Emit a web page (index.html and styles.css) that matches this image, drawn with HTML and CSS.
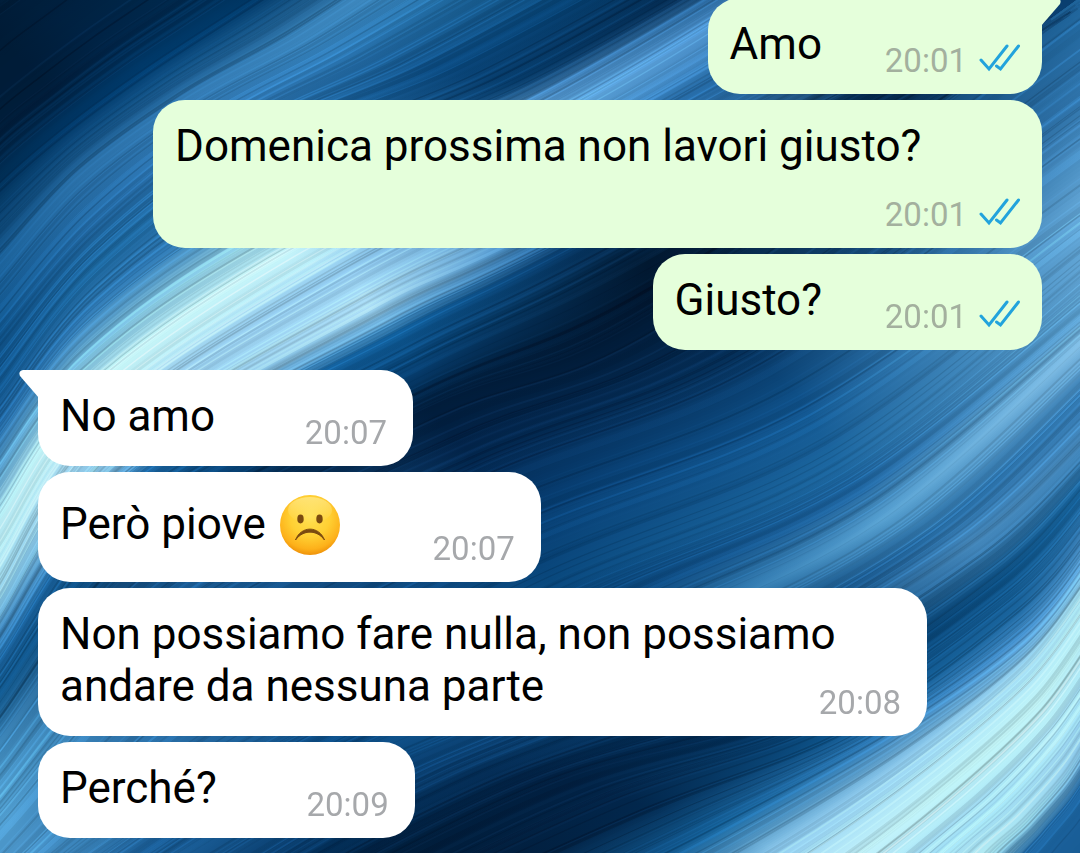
FILE: index.html
```html
<!DOCTYPE html>
<html lang="it">

<head>
    <meta charset="utf-8">
    <meta name="viewport" content="width=device-width, initial-scale=1">
    <title>Chat</title>
    <link rel="stylesheet" href="styles.css">
</head>

<body>
    <svg class="sprite" aria-hidden="true">
        <symbol id="ticks" viewBox="0 0 42 36">
            <path d="M2 17l8 9L28 3" />
            <path d="M17.500 23l4 3L39.500 3" />
        </symbol>
        <symbol id="tail" viewBox="0 0 20 28">
            <path d="M20 0H4Q-1 1 1 6L20 28z" />
        </symbol>
    </svg>

    <canvas id="wallpaper" width="1080" height="853"></canvas>

    <main class="chat">
        <div class="message out first">
            <svg class="tail"><use href="#tail" /></svg>
            <p>Amo<span class="spacer"></span></p>
            <div class="meta"><time>20:01</time><svg class="ticks"><use href="#ticks" /></svg></div>
        </div>
        <div class="message out">
            <p>Domenica prossima non lavori giusto?<span class="spacer"></span></p>
            <div class="meta"><time>20:01</time><svg class="ticks"><use href="#ticks" /></svg></div>
        </div>
        <div class="message out">
            <p>Giusto?<span class="spacer"></span></p>
            <div class="meta"><time>20:01</time><svg class="ticks"><use href="#ticks" /></svg></div>
        </div>

        <div class="message in first">
            <svg class="tail"><use href="#tail" /></svg>
            <p>No amo<span class="spacer"></span></p>
            <div class="meta"><time>20:07</time></div>
        </div>
        <div class="message in">
            <p>Però piove <svg class="emoji" viewBox="0 0 64 66" role="img" aria-label="faccina triste">
                    <defs>
                        <radialGradient id="face" cx="50%" cy="36%" r="66%">
                            <stop offset="0" stop-color="#ffe052" />
                            <stop offset="0.5" stop-color="#ffd033" />
                            <stop offset="0.82" stop-color="#fdb11a" />
                            <stop offset="1" stop-color="#ec8c06" />
                        </radialGradient>
                        <linearGradient id="shine" x1="0" y1="0" x2="0" y2="1">
                            <stop offset="0" stop-color="#fff0a0" stop-opacity="0.6" />
                            <stop offset="1" stop-color="#fff0a0" stop-opacity="0" />
                        </linearGradient>
                    </defs>
                    <circle cx="32" cy="33" r="30" fill="url(#face)" />
                    <ellipse cx="32" cy="18" rx="22" ry="13" fill="url(#shine)" />
                    <ellipse cx="22.500" cy="27" rx="3.2" ry="4.4" fill="#7a4a10" />
                    <ellipse cx="41.500" cy="27" rx="3.2" ry="4.4" fill="#7a4a10" />
                    <path d="M17.500 48C23 33.500 41 33.500 46.500 48C39 37.500 25 37.500 17.500 48z" fill="#7a4a10" stroke="#7a4a10" stroke-linejoin="round" />
                </svg><span class="spacer"></span></p>
            <div class="meta"><time>20:07</time></div>
        </div>
        <div class="message in">
            <p>Non possiamo fare nulla, non possiamo andare da nessuna parte<span class="spacer"></span></p>
            <div class="meta"><time>20:08</time></div>
        </div>
        <div class="message in">
            <p>Perché?<span class="spacer"></span></p>
            <div class="meta"><time>20:09</time></div>
        </div>
    </main>

    <script src="wallpaper.js"></script>
</body>

</html>
```
FILE: styles.css
```css
* {
    box-sizing: border-box;
}

body {
    margin: 0;
    height: 100vh;
    overflow: hidden;
    background-color: #0a3f70;
    font-family: Roboto, "Liberation Sans", sans-serif;
}

.sprite {
    display: none;
}

#wallpaper {
    position: absolute;
    top: 0;
    left: 0;
    width: 100%;
    height: 100%;
    object-fit: cover;
}

/* newest message stays at the bottom, older ones run off the top */
.chat {
    position: relative;
    height: 100%;
    padding: 0 38px 15px;
    display: flex;
    flex-direction: column;
    justify-content: flex-end;
    gap: 6px;
}

.message {
    position: relative;
    flex-shrink: 0;
    max-width: calc(100% - 115px);
    padding: 20px 22px 24px;
    border-radius: 32px;
}

.message p {
    margin: 0;
    font-size: 44px;
    line-height: 52px;
    color: #000;
}

.out {
    align-self: flex-end;
    background-color: #e5ffdb;
}

.in {
    align-self: flex-start;
    background-color: #fff;
}

.in.first {
    margin-top: 14px;
    border-top-left-radius: 0;
}

.out.first {
    border-top-right-radius: 0;
}

.tail {
    position: absolute;
    top: 0;
    width: 20px;
    height: 28px;
}

.in .tail {
    left: -19px;
    fill: #fff;
}

.out .tail {
    right: -19px;
    fill: #e5ffdb;
    transform: scaleX(-1);
}

/* keeps the last line of text clear of the time */
.spacer {
    display: inline-block;
    width: 176px;
    height: 1px;
}

.out .spacer {
    width: 198px;
}

.meta {
    position: absolute;
    right: 26px;
    bottom: 15px;
    display: flex;
    align-items: center;
    gap: 12px;
    font-size: 33px;
    line-height: 36px;
    color: #a6a8ab;
}

.out .meta {
    right: 21px;
    color: #a3b09e;
}

.ticks {
    width: 42px;
    height: 36px;
    fill: none;
    stroke: #22a3dc;
    stroke-width: 3;
    stroke-linecap: round;
}

.emoji {
    width: 64px;
    height: 66px;
    margin: 0 1px;
    vertical-align: -19px;
}
```
FILE: wallpaper.js
```js
// Each guide is a curve (6 points) with a colour at every point.
// Strands are drawn between neighbouring guides.
var guides = [
    [[-90, 60], [-60, 20], [-40, -5], [-20, -20], [0, -40], [20, -60], '001a33 001a33 001a33 001a33 001a33 001a33'],
    [[-30, 170], [0, 130], [50, 90], [110, 45], [170, 5], [230, -35], '00203f 001d3a 001d3a 002447 00284c 002d55'],
    [[-30, 225], [0, 190], [70, 130], [150, 72], [230, 20], [300, -25], '003058 003058 003766 003c6e 003a6a 00335f'],
    [[-30, 300], [0, 270], [80, 180], [190, 100], [300, 40], [400, -25], '1a5f98 1c639c 2a70a8 337bb4 3a84bb 3f8ac0'],
    [[-30, 375], [0, 335], [90, 230], [220, 125], [350, 55], [490, -25], '0c4c82 0f5288 20659e 2f75b0 2a75b0 1c6599'],
    [[-30, 430], [0, 390], [95, 270], [260, 145], [440, 70], [620, -25], '0f5288 135a94 1c68a0 2670aa 0b4a80 054070'],
    [[-30, 480], [0, 430], [95, 310], [270, 190], [520, 85], [710, -20], '1a65a0 246ca8 2f7ab5 2f7ab5 063a68 03284d'],
    [[-30, 530], [0, 475], [80, 370], [240, 255], [550, 95], [730, -10], '3a84bc 5ba2ce 7cc0e0 98d4e6 4a8cc4 2b6ca4'],
    [[-30, 580], [0, 530], [90, 400], [290, 260], [590, 105], [780, -10], '9fdcec b8eaf2 c4f4f6 c4f4fa 5aa0d6 4a8ecc'],
    [[-30, 650], [0, 590], [105, 430], [350, 270], [630, 130], [860, 0], '8ccce4 a0dcf0 9fd2ee 90caf0 2a72b0 1c5f98'],
    [[-30, 690], [0, 630], [120, 460], [370, 310], [520, 240], [960, 20], '4a98c8 458cc0 8cc8ea b0e2fa 4a92cc 0a3055'],
    [[-30, 710], [0, 660], [130, 485], [400, 335], [560, 255], [1000, 20], '1c65a0 1c65a0 1c65a0 0f5c98 083c6c 02203f'],
    [[-30, 750], [0, 700], [140, 525], [420, 375], [650, 265], [1060, 20], '0f5488 0f5488 0a4a80 063c6c 011830 0a3a68'],
    [[-30, 790], [0, 740], [150, 560], [430, 410], [650, 320], [1085, 0], '3a84b8 3a84b8 0a3a68 011c3a 011a36 1f659c'],
    [[-30, 850], [0, 800], [180, 600], [470, 455], [740, 345], [1085, 100], '4f9ccc 4f9ccc 1c5f98 02244a 042c54 3075ac'],
    [[-20, 900], [20, 850], [200, 680], [500, 520], [800, 400], [1090, 200], '4a94c8 4a94c8 1c5f98 05386a 0f5088 62a6d6'],
    [[0, 930], [80, 853], [260, 740], [560, 590], [840, 470], [1090, 270], '1c5f98 3a84bb 1c5f98 0a4a80 1e6aa4 62a6d6'],
    [[30, 940], [120, 870], [310, 750], [620, 600], [860, 490], [1090, 310], '1c5f98 1c5f98 0c4c84 0a4478 1c609a 5a9ecc'],
    [[60, 940], [150, 880], [350, 765], [650, 640], [880, 525], [1090, 340], '1c5f98 1c5f98 0c4c84 1c659e 5aa4d4 88c4ea'],
    [[150, 940], [220, 890], [430, 770], [740, 645], [940, 530], [1090, 390], '0a3f70 0a3f70 0a3f70 0a3f70 24689f 2f76ae'],
    [[170, 950], [260, 890], [480, 775], [770, 665], [975, 545], [1090, 440], '02305a 02305a 05305a 0a4578 4a8ec2 4a8ec2'],
    [[200, 960], [330, 890], [560, 780], [800, 710], [1000, 580], [1090, 485], '001c38 001c38 011f40 02305a 0b4d80 146098'],
    [[280, 980], [450, 900], [650, 810], [850, 730], [1020, 610], [1090, 530], '011a36 011a36 02284e 0f5890 1a659e 3a80b8'],
    [[450, 1000], [590, 900], [720, 830], [890, 735], [1025, 640], [1090, 560], '0a4578 0a4578 146098 2f76ae 4a90c8 62a6d6'],
    [[500, 1000], [660, 920], [780, 853], [910, 765], [1025, 670], [1090, 585], '2f76ae 3a84bb 90cdf0 98d4f4 a0dcf6 a8e4f4'],
    [[600, 1020], [740, 940], [860, 860], [960, 780], [1040, 705], [1090, 635], 'a8e4f4 b0e8f8 c4f4fc c4f8fa c4f8fa b8f0f8'],
    [[700, 1040], [850, 950], [920, 870], [1000, 800], [1055, 740], [1090, 690], 'a0dcf0 98d4f0 98d4f0 98d4f0 a0d8f0 98d4f0'],
    [[850, 1050], [930, 970], [975, 870], [1025, 820], [1065, 775], [1090, 735], 'a8e4f4 a8e4f4 b4ecf2 a8e4f4 98d4f0 8cc8ea'],
    [[900, 1060], [970, 970], [1010, 880], [1045, 835], [1070, 805], [1090, 775], '1c629c 1c629c 1c629c 1c629c 1c629c 1c629c'],
    [[1000, 1100], [1050, 1020], [1080, 980], [1100, 960], [1120, 940], [1150, 910], '0e5088 0e5088 0e5088 0e5088 0e5088 0e5088']
];

var ctx = document.getElementById('wallpaper').getContext('2d');

// small seeded generator, so the wallpaper is the same on every load
var seed = 11;
var random = function() {
    seed = (seed * 16807) % 2147483647;
    return seed / 2147483647;
};

var parseColours = function(list) {
    return list.split(' ').map(function(hex) {
        return [0, 2, 4].map(function(i) {
            return parseInt(hex.substr(i, 2), 16);
        });
    });
};

var mix = function(a, b, t) {
    return a.map(function(v, i) {
        return v + (b[i] - v) * t;
    });
};

var drawStrand = function(from, to, t, shade, width, alpha) {
    var fromColours = parseColours(from[6]);
    var toColours = parseColours(to[6]);
    var points = [];
    for (let i = 0; i < 6; i++) {
        points.push(mix(from[i], to[i], t));
    }

    var first = points[0];
    var last = points[5];
    var dx = last[0] - first[0];
    var dy = last[1] - first[1];
    var gradient = ctx.createLinearGradient(first[0], first[1], last[0], last[1]);
    for (let i = 0; i < 6; i++) {
        let at = ((points[i][0] - first[0]) * dx + (points[i][1] - first[1]) * dy) / (dx * dx + dy * dy);
        let c = mix(fromColours[i], toColours[i], t).map(function(v) {
            return Math.max(0, Math.min(255, Math.round(v * (1 + shade) + shade * 25)));
        });
        gradient.addColorStop(Math.max(0, Math.min(1, at)), 'rgba(' + c.join(',') + ',' + alpha + ')');
    }

    ctx.beginPath();
    ctx.moveTo(first[0], first[1]);
    for (let i = 0; i < 5; i++) {
        let p0 = points[Math.max(0, i - 1)];
        let p1 = points[i];
        let p2 = points[i + 1];
        let p3 = points[Math.min(5, i + 2)];
        ctx.bezierCurveTo(
            p1[0] + (p2[0] - p0[0]) / 6, p1[1] + (p2[1] - p0[1]) / 6,
            p2[0] - (p3[0] - p1[0]) / 6, p2[1] - (p3[1] - p1[1]) / 6,
            p2[0], p2[1]);
    }
    ctx.strokeStyle = gradient;
    ctx.lineWidth = width;
    ctx.stroke();
};

for (let g = 0; g < guides.length - 1; g++) {
    // solid base
    for (let i = 0; i < 24; i++) {
        drawStrand(guides[g], guides[g + 1], i / 24, 0, 10, 1);
    }
}

for (let g = 0; g < guides.length - 1; g++) {
    // soft streaks, then fine hairs on top
    for (let i = 0; i < 8; i++) {
        drawStrand(guides[g], guides[g + 1], random(), random() * 0.4 - 0.2, 3 + random() * 4, 0.4);
    }
    for (let i = 0; i < 12; i++) {
        drawStrand(guides[g], guides[g + 1], random(), random() * 0.7 - 0.35, 1 + random(), 0.4);
    }
}
```
